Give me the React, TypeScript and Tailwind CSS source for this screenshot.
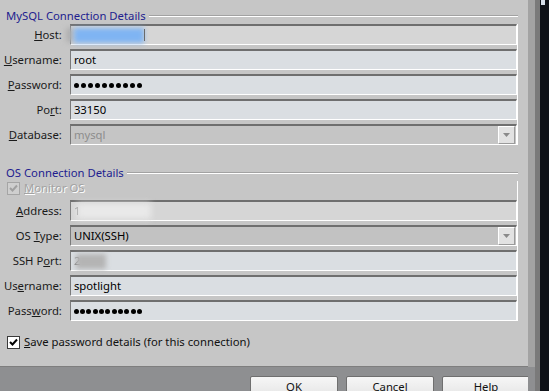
import React from 'react';

const fieldBase =
  'h-[21px] w-[448px] ml-2 flex items-center border-t-2 border-l border-b border-r border-t-[#6f6f6f] border-l-[#7a7a7a] border-b-white border-r-white pl-[3px] text-[11.3px]';

function Label({ children }: { children: React.ReactNode }) {
  return <div className="w-[62px] text-right text-[11.3px] text-[#1a1a1a] whitespace-nowrap leading-[21px]">{children}</div>;
}

function GroupTitle({ text }: { text: string }) {
  return (
    <div className="h-[16px] flex items-center pl-[6px]">
      <span className="text-[11.3px] text-[#221d8f] leading-[16px] whitespace-nowrap">{text}</span>
      <div className="flex-1 ml-[3px] mr-[10px] border-t border-t-[#a2a2a2] border-b border-b-white" />
    </div>
  );
}

function Dots({ n, gap }: { n: number; gap: string }) {
  return (
    <div className={`flex items-center ${gap}`}>
      {Array.from({ length: n }, (_, i) => (
        <div key={i} className="w-[5px] h-[5px] rounded-full bg-black" />
      ))}
    </div>
  );
}

function DropButton() {
  return (
    <div className="ml-auto mr-[1px] w-[17px] h-[18px] bg-[#e2e2e2] border-t border-l border-t-white border-l-white border-r border-b border-r-[#9a9a9a] border-b-[#9a9a9a] flex items-center justify-center">
      <svg width="7" height="4" viewBox="0 0 7 4">
        <polygon points="0,0 7,0 3.5,4" fill="#8a8a8a" />
      </svg>
    </div>
  );
}

function Check({ color }: { color: string }) {
  return (
    <svg width="9" height="9" viewBox="0 0 9 9">
      <polyline points="1,4 3.5,6.5 8,1.5" fill="none" stroke={color} strokeWidth="2" />
    </svg>
  );
}

export default function App() {
  return (
    <div className="w-[549px] h-[391px] flex overflow-hidden font-['Segoe_UI','Noto_Sans',sans-serif] bg-[#8e8f91]">
      <div className="w-[528px] flex flex-col">
        <div className="h-[367px] bg-[#c6c6c6] border-b border-b-[#7e7e7e] pt-[8px] flex flex-col">
          <GroupTitle text="MySQL Connection Details" />
          <div className="flex flex-col gap-[4px] border-r border-r-white mr-[10px]">
            <div className="flex items-center">
              <Label><u>H</u>ost:</Label>
              <div className={`${fieldBase} bg-[#d6d6d6]`}>
                <div className="w-[8px] h-[14px] bg-[#b0b0b0] blur-[2.5px] -ml-[8px]" />
                <div className="w-[70px] h-[15px] bg-[#7fb4f3] blur-[2.5px]" />
                <div className="w-[1px] h-[12px] bg-[#6a6a6a] blur-[0.5px]" />
              </div>
            </div>
            <div className="flex items-center">
              <Label><u>U</u>sername:</Label>
              <div className={`${fieldBase} bg-[#dadee2] text-black`}>root</div>
            </div>
            <div className="flex items-center">
              <Label><u>P</u>assword:</Label>
              <div className={`${fieldBase} bg-[#dadee2]`}>
                <Dots n={10} gap="gap-[2px]" />
              </div>
            </div>
            <div className="flex items-center">
              <Label>Po<u>r</u>t:</Label>
              <div className={`${fieldBase} bg-[#dadee2] text-black`}>33150</div>
            </div>
            <div className="flex items-center">
              <Label><u>D</u>atabase:</Label>
              <div className={`${fieldBase} bg-[#c5c5c5] text-[#8d8d8d]`}>
                mysql
                <DropButton />
              </div>
            </div>
          </div>

          <div className="mt-[20px]">
            <GroupTitle text="OS Connection Details" />
          </div>
          <div className="flex flex-col border-r border-r-white mr-[10px]">
            <div className="h-[15px] flex items-center pl-[7px]">
              <div className="w-[13px] h-[13px] border border-[#a5a5a5] bg-[#cfcfcf] flex items-center justify-center">
                <Check color="#a0a0a0" />
              </div>
              <span className="ml-[4px] text-[11.3px] text-[#a3a3a3] [text-shadow:1px_1px_0_#ffffff]">
                <u>M</u>onitor OS
              </span>
            </div>
            <div className="mt-[4px] flex flex-col gap-[4px]">
              <div className="flex items-center">
                <Label><u>A</u>ddress:</Label>
                <div className={`${fieldBase} bg-[#d6d6d6]`}>
                  <span className="text-[#777] blur-[0.6px]">1</span>
                  <div className="w-[74px] h-[16px] bg-[#e9e9e9] blur-[3px] -ml-[3px]" />
                </div>
              </div>
              <div className="flex items-center">
                <Label>OS <u>T</u>ype:</Label>
                <div className={`${fieldBase} bg-[#c2c2c2] text-black`}>
                  UNIX(SSH)
                  <DropButton />
                </div>
              </div>
              <div className="flex items-center">
                <Label>SSH P<u>o</u>rt:</Label>
                <div className={`${fieldBase} bg-[#dadee2]`}>
                  <span className="text-[#777] blur-[0.6px]">2</span>
                  <div className="w-[30px] h-[15px] bg-[#b4b4b4] blur-[2.5px] -ml-[4px]" />
                </div>
              </div>
              <div className="flex items-center">
                <Label>Us<u>e</u>rname:</Label>
                <div className={`${fieldBase} bg-[#dadee2] text-black`}>spotlight</div>
              </div>
              <div className="flex items-center">
                <Label>Pass<u>w</u>ord:</Label>
                <div className={`${fieldBase} bg-[#dadee2]`}>
                  <Dots n={11} gap="gap-[1.3px]" />
                </div>
              </div>
            </div>
          </div>

          <div className="mt-[14px] h-[14px] flex items-center pl-[7px]">
            <div className="w-[13px] h-[13px] border border-[#3a3a3a] bg-white flex items-center justify-center">
              <Check color="#000000" />
            </div>
            <span className="ml-[4px] text-[11.3px] text-[#111]">
              <u>S</u>ave password details (for this connection)
            </span>
          </div>
        </div>

        <div className="flex-1 flex pl-[250px] gap-[8px] overflow-hidden">
          {['OK', 'Cancel', 'Help'].map(b => (
            <div
              key={b}
              className="mt-[9px] w-[88px] h-[23px] shrink-0 rounded-[2px] border border-[#6f6f6f] bg-gradient-to-b from-[#f6f6f6] to-[#e4e4e4] flex items-start pt-[3px] justify-center text-[11.3px] leading-[14px] text-[#111]"
            >
              {b}
            </div>
          ))}
        </div>
      </div>
      <div className="w-[7px] flex flex-col">
        <div className="h-[367px] bg-[#a3a3a3]" />
        <div className="flex-1 bg-[#8e8f91]" />
      </div>
      <div className="w-[5px] bg-[#7a7a7a]" />
      <div className="w-[9px] bg-[#0e1117] flex">
        <div className="ml-[1px] w-[4px] h-[5px] bg-[#d5dde8]" />
      </div>
    </div>
  );
}
